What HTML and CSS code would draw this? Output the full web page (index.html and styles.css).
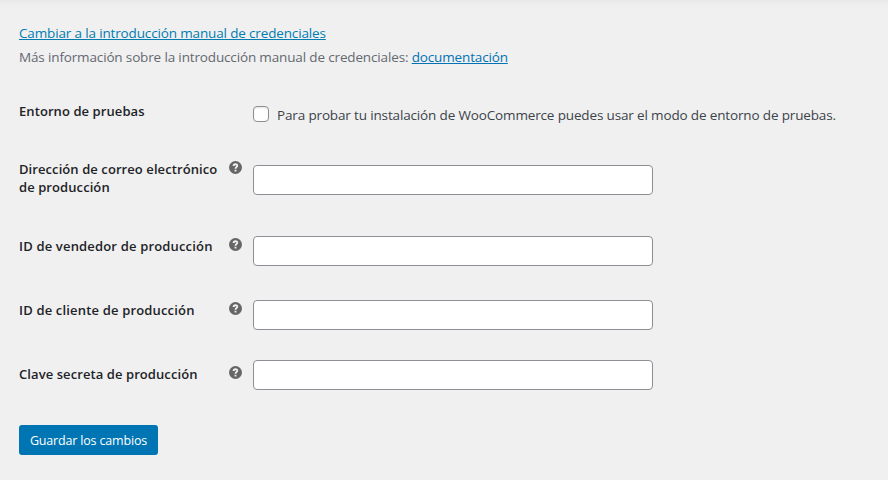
FILE: index.html
```html
<!DOCTYPE html>
<html lang="es">
<head>
<meta charset="utf-8">
<title>Ajustes</title>
<link rel="stylesheet" href="styles.css">
</head>
<body>
<svg class="defs" width="0" height="0"><symbol id="help" viewBox="0 0 12 12"><circle cx="6" cy="6" r="6" fill="#666"/><path d="M4.2 4.6C4.3 2.4 7.7 2.5 7.6 4.4C7.6 5.6 6 5.7 6 7.1M6 8V9.7" fill="none" stroke="#f0f0f0" stroke-width="1.7"/></symbol></svg>
<main>
<div class="intro">
<p><a href="#">Cambiar a la introducción manual de credenciales</a></p>
<p>Más información sobre la introducción manual de credenciales: <a class="docs" href="#">documentación</a></p>
</div>
<form>
<div class="row sandbox"><div class="label">Entorno de pruebas</div><label class="check"><input type="checkbox"><span>Para probar tu instalación de WooCommerce puedes usar el modo de entorno de pruebas.</span></label></div>
<div class="row email"><div class="label">Dirección de correo electrónico<br>de producción</div><svg class="help"><use href="#help"/></svg><input class="field" type="text"></div>
<div class="row seller"><div class="label">ID de vendedor de producción</div><svg class="help"><use href="#help"/></svg><input class="field" type="text"></div>
<div class="row client"><div class="label">ID de cliente de producción</div><svg class="help"><use href="#help"/></svg><input class="field" type="text"></div>
<div class="row secret"><div class="label">Clave secreta de producción</div><svg class="help"><use href="#help"/></svg><input class="field" type="text"></div>
<button type="button">Guardar los cambios</button>
</form>
</main>
</body>
</html>
```
FILE: styles.css
```css
* { box-sizing: border-box; }
body { margin: 0; height: 480px; overflow: hidden; background: #f0f0f0 linear-gradient(#e8e8e8, #eeeeee 4px, #f0f0f0 10px) no-repeat; font: 13.5px/24px "Open Sans", "Noto Sans", sans-serif; letter-spacing: -0.148px; color: #646970; }
.defs { display: block; }
main { padding: 21px 19px 0; }
p { margin: 0; white-space: nowrap; }
a { color: #007cb0; text-decoration: underline; text-decoration-thickness: 1px; text-underline-offset: 1px; }
.docs { color: #0073b5; }
form { padding-top: 27px; }
.row { display: grid; grid-template-columns: 210px 24px 400px; align-items: start; }
.label { color: #1d2327; font-size: 13px; font-weight: 600; line-height: 18px; letter-spacing: 0.08px; padding-top: 1px; white-space: nowrap; }
.help { width: 13px; height: 13px; margin-top: 2px; }
.sandbox { height: 64px; }
.email { height: 76px; }
.seller { height: 64px; }
.client { height: 60px; }
.secret { height: 65px; }
.sandbox .label { padding-top: 6px; }
.email .label { padding-top: 0; }
.email .help { margin-top: 1px; }
.email .field { margin-top: 5px; }
.seller .label, .client .label { letter-spacing: 0.17px; }
.secret .label { padding-top: 5px; }
.secret .help { margin-top: 6px; }
.check { grid-column: 3; display: flex; align-items: flex-start; gap: 8px; padding-top: 10px; white-space: nowrap; line-height: 18px; color: #3c434a; }
.check input { appearance: none; flex: none; width: 16px; height: 16px; margin: 0; border: 1px solid #8c8f94; border-radius: 4px; background: #fff; box-shadow: inset 0 1px 2px rgba(0, 0, 0, 0.1); }
.field { width: 400px; height: 30px; margin: 0; border: 1px solid #8c8f94; border-radius: 4px; background: #fff; }
button { display: block; width: 139px; height: 30px; padding: 1px 0 0; border: 0; border-radius: 3px; background: #0075b3; color: #fff; font: 12.5px/29px "Open Sans", sans-serif; letter-spacing: -0.17px; white-space: nowrap; }
```
